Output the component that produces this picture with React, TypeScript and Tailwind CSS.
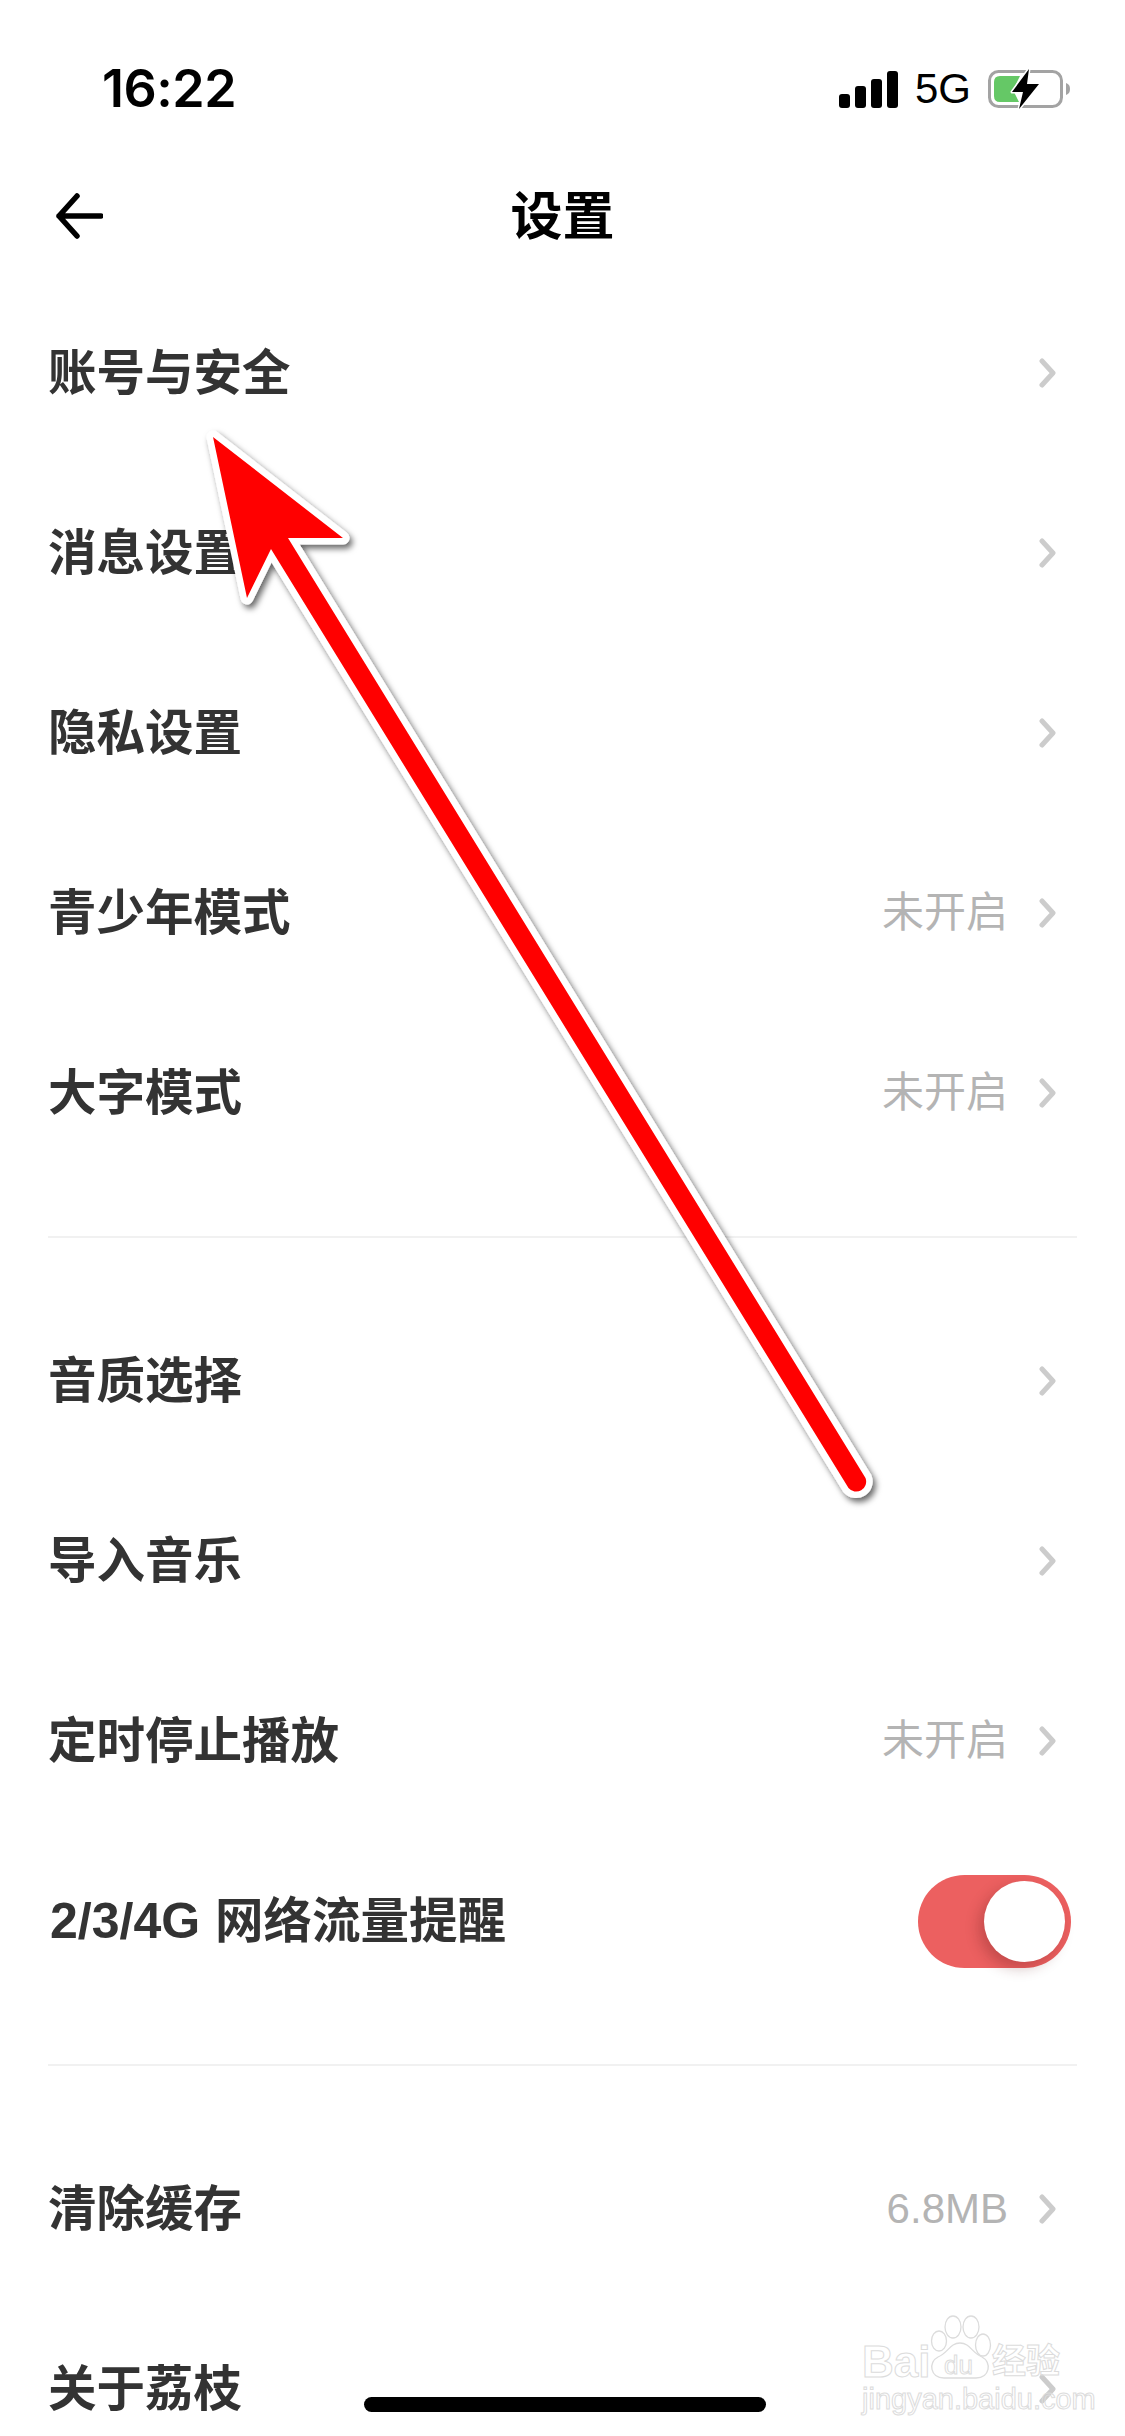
const CJK = 'font-["Liberation_Sans","Noto_Sans_CJK_SC",sans-serif]'

type Row = { label: string; prefix?: string; value?: string; toggle?: boolean }

const groupOne: Row[] = [
  { label: '账号与安全' },
  { label: '消息设置' },
  { label: '隐私设置' },
  { label: '青少年模式', value: '未开启' },
  { label: '大字模式', value: '未开启' },
]

const groupTwo: Row[] = [
  { label: '音质选择' },
  { label: '导入音乐' },
  { label: '定时停止播放', value: '未开启' },
  { prefix: '2/3/4G', label: '网络流量提醒', toggle: true },
]

const groupThree: Row[] = [{ label: '清除缓存', value: '6.8MB' }, { label: '关于荔枝' }]

function Chevron() {
  return (
    <svg width="18" height="30" viewBox="0 0 18 30" fill="none" className="mr-[14px] shrink-0">
      <path d="M3 3 L14 15 L3 27" stroke="#cccccc" strokeWidth="5" strokeLinecap="round" strokeLinejoin="round" />
    </svg>
  )
}

function Toggle() {
  return (
    <div className="flex h-[93px] w-[153px] items-center justify-end rounded-full bg-[#ec6060] pr-[6px]">
      <div className="h-[81px] w-[81px] rounded-full bg-white shadow-[-5px_6px_14px_rgba(90,20,20,0.28)]" />
    </div>
  )
}

function SettingRow({ row }: { row: Row }) {
  return (
    <div className="flex h-[180px] items-center justify-between pl-[48px] pr-[54px]">
      <span className="text-[48.5px] leading-none font-semibold text-[#333333]">
        {row.prefix && <span className="mr-[15px] ml-[2px] text-[50px]">{row.prefix}</span>}
        {row.label}
      </span>
      {row.toggle ? (
        <Toggle />
      ) : (
        <div className="flex items-center gap-[31px]">
          {row.value && <span className="text-[42px] leading-none font-normal text-[#b4b4b4]">{row.value}</span>}
          <Chevron />
        </div>
      )}
    </div>
  )
}

function StatusIcons() {
  return (
    <div className="flex items-center">
      <div className="flex h-[37px] items-end gap-[5px]">
        <div className="h-[14px] w-[11px] rounded-[3px] bg-black" />
        <div className="h-[22px] w-[11px] rounded-[3px] bg-black" />
        <div className="h-[29px] w-[11px] rounded-[3px] bg-black" />
        <div className="h-[37px] w-[11px] rounded-[3px] bg-black" />
      </div>
      <span className="ml-[17px] text-[42px] leading-none text-black">5G</span>
      <svg width="84" height="42" viewBox="0 0 84 42" className="ml-[17px]">
        <rect x="1.5" y="3.5" width="72" height="35" rx="9" fill="none" stroke="#a3a3a3" strokeWidth="3" />
        <path d="M78 15 C81 16 82 18 82 21 C82 24 81 26 78 27 Z" fill="#a3a3a3" />
        <path d="M6 14 Q6 8 12 8 H32 L25 22 L31 34 H12 Q6 34 6 28 Z" fill="#65c866" />
        <path d="M41 1 L24 24 H35 L31 41 L51 16 H39 Z" fill="#000000" stroke="#ffffff" strokeWidth="3" strokeLinejoin="round" paintOrder="stroke" />
      </svg>
    </div>
  )
}

function BaiduMark() {
  const outline = 'text-transparent [-webkit-text-stroke:1px_#dcdcdc]'
  return (
    <div className="absolute left-[860px] top-[2312px] h-[104px] w-[210px]">
      <svg width="210" height="104" viewBox="0 0 210 104" fill="none" stroke="#dcdcdc" strokeWidth="1.3" className="absolute left-0 top-0">
        <ellipse cx="79" cy="29" rx="7.5" ry="10" />
        <ellipse cx="93" cy="15" rx="8" ry="11" />
        <ellipse cx="111" cy="15" rx="8" ry="11" />
        <ellipse cx="123" cy="33" rx="7.5" ry="11" />
        <path d="M100 31 C90 31 88 41 78 45 C68 50 70 66 84 66 H116 C130 66 132 50 122 45 C112 41 110 31 100 31 Z" />
      </svg>
      <span className={`absolute left-[2px] top-[28px] text-[44px] leading-none font-bold ${outline}`}>Bai</span>
      <span className={`absolute left-[84px] top-[40px] text-[26px] leading-none ${outline}`}>du</span>
      <span className={`absolute left-[132px] top-[32px] text-[34px] leading-none font-bold ${outline}`}>经验</span>
      <span className={`absolute left-[2px] top-[73px] text-[29px] leading-none ${outline}`}>jingyan.baidu.com</span>
    </div>
  )
}

function RedArrow() {
  return (
    <svg width="1125" height="2436" viewBox="0 0 1125 2436" className="pointer-events-none absolute left-0 top-0">
      <defs>
        <filter id="arrow-shadow" x="-10%" y="-10%" width="120%" height="120%">
          <feDropShadow dx="3" dy="4" stdDeviation="3" floodColor="#000000" floodOpacity="0.6" />
        </filter>
      </defs>
      <path
        d="M213 437 L343 538 L288 538 L865.5 1478 A10 10 0 0 1 848.5 1488 L271 549 L247 598 Z"
        fill="#ff0000"
        stroke="#ffffff"
        strokeWidth="13"
        strokeLinejoin="round"
        paintOrder="stroke"
        filter="url(#arrow-shadow)"
      />
    </svg>
  )
}

export default function App() {
  return (
    <div className={`relative h-[2436px] w-[1125px] overflow-hidden bg-white ${CJK}`}>
      <div className="flex h-[151px] items-start justify-between pl-[102px] pr-[53px] pt-[68px]">
        <span className="font-['Inter',sans-serif] text-[52px] leading-[42px] font-semibold tracking-[-0.5px] text-black">16:22</span>
        <StatusIcons />
      </div>

      <div className="relative flex h-[132px] items-center justify-center">
        <svg width="48" height="46" viewBox="0 0 48 46" fill="none" className="absolute left-[55px] top-[42px]">
          <path d="M22 3 L4 23 L22 43 M4 23 H46" stroke="#000000" strokeWidth="5.5" strokeLinecap="round" strokeLinejoin="round" />
        </svg>
        <span className="text-[52px] leading-none font-bold text-black">设置</span>
      </div>

      {groupOne.map((row) => (
        <SettingRow key={row.label} row={row} />
      ))}
      <div className="mx-[48px] my-[53px] h-[2px] bg-[#f1f1f1]" />
      {groupTwo.map((row) => (
        <SettingRow key={row.label} row={row} />
      ))}
      <div className="mx-[48px] my-[53px] h-[2px] bg-[#f1f1f1]" />
      {groupThree.map((row) => (
        <SettingRow key={row.label} row={row} />
      ))}

      <div className="absolute bottom-[24px] left-[364px] h-[15px] w-[402px] rounded-full bg-black" />
      <BaiduMark />
      <RedArrow />
    </div>
  )
}
